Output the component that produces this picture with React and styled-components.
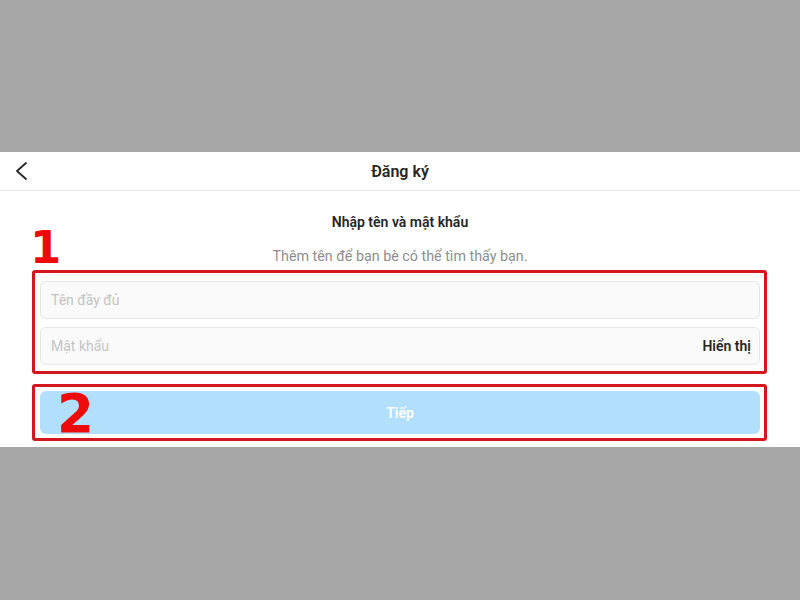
import React from "react";
import styled, { createGlobalStyle } from "styled-components";

const Global = createGlobalStyle`
  html, body { margin: 0; padding: 0; }
  body {
    width: 800px;
    height: 600px;
    overflow: hidden;
    background: #a6a6a6;
    font-family: Roboto, "Noto Sans", "Liberation Sans", sans-serif;
    color: #262626;
  }
`;

const Page = styled.div`
  width: 800px;
  height: 600px;
  padding-top: 152px;
  box-sizing: border-box;
  background: #a6a6a6;
`;

const Panel = styled.div`
  background: #ffffff;
  height: 295px;
  display: flex;
  flex-direction: column;
`;

const Header = styled.div`
  height: 38px;
  border-bottom: 1px solid #e3e3e3;
  display: flex;
  align-items: center;
  justify-content: center;
  position: relative;
`;

const BackButton = styled.div`
  position: absolute;
  left: 14px;
  top: 9px;
  width: 16px;
  height: 20px;
  display: flex;
`;

const Title = styled.div`
  font-size: 16px;
  font-weight: 600;
  color: #262626;
`;

const Content = styled.div`
  display: flex;
  flex-direction: column;
  align-items: center;
  padding-top: 22px;
`;

const Heading = styled.div`
  font-size: 14px;
  font-weight: 600;
  line-height: 18px;
  color: #262626;
`;

const Sub = styled.div`
  margin-top: 16px;
  font-size: 14.3px;
  line-height: 18px;
  color: #8e8e8e;
`;

const Mark = styled.div`
  align-self: stretch;
  margin: ${(p) => p.$mt}px 33px 0 32px;
  border: 3px solid #d4161e;
  border-radius: 3px;
  padding: ${(p) => p.$pt}px 4px ${(p) => p.$pb}px 5px;
  display: flex;
  flex-direction: column;
  gap: 8px;
  position: relative;
`;

const Num = styled.div`
  position: absolute;
  left: ${(p) => p.$x}px;
  top: ${(p) => p.$y}px;
  font-family: "DejaVu Sans", "Liberation Sans", sans-serif;
  font-weight: 700;
  font-size: ${(p) => p.$size}px;
  line-height: 1;
  color: #ee0a0a;
  z-index: 2;
`;

const Field = styled.div`
  height: 38px;
  box-sizing: border-box;
  border: 1px solid #e6e6e6;
  border-radius: 6px;
  background: #fafafa;
  display: flex;
  align-items: center;
  justify-content: space-between;
  padding: 0 8px 0 10px;
`;

const Placeholder = styled.span`
  font-size: 14px;
  color: #c4c4c4;
`;

const Toggle = styled.span`
  font-size: 14px;
  font-weight: 600;
  color: #262626;
`;

const Button = styled.div`
  height: 43px;
  border-radius: 6px;
  background: #b2dffc;
  color: #ffffff;
  font-size: 14px;
  font-weight: 600;
  display: flex;
  align-items: center;
  justify-content: center;
`;

export default function App() {
  return (
    <>
      <Global />
      <Page>
        <Panel>
          <Header>
            <BackButton>
              <svg width="16" height="20" viewBox="0 0 16 20">
                <polyline
                  points="12,2 3,10 12,18"
                  fill="none"
                  stroke="#262626"
                  strokeWidth="1.8"
                  strokeLinecap="round"
                  strokeLinejoin="round"
                />
              </svg>
            </BackButton>
            <Title>Đăng ký</Title>
          </Header>
          <Content>
            <Heading>Nhập tên và mật khẩu</Heading>
            <Sub>Thêm tên để bạn bè có thể tìm thấy bạn.</Sub>
            <Mark $mt={5} $pt={8} $pb={6}>
              <Num $x={-5} $y={-48} $size={45}>1</Num>
              <Field>
                <Placeholder>Tên đầy đủ</Placeholder>
              </Field>
              <Field>
                <Placeholder>Mật khẩu</Placeholder>
                <Toggle>Hiển thị</Toggle>
              </Field>
            </Mark>
            <Mark $mt={10} $pt={4} $pb={4}>
              <Num $x={22} $y={0} $size={53}>2</Num>
              <Button>Tiếp</Button>
            </Mark>
          </Content>
        </Panel>
      </Page>
    </>
  );
}
